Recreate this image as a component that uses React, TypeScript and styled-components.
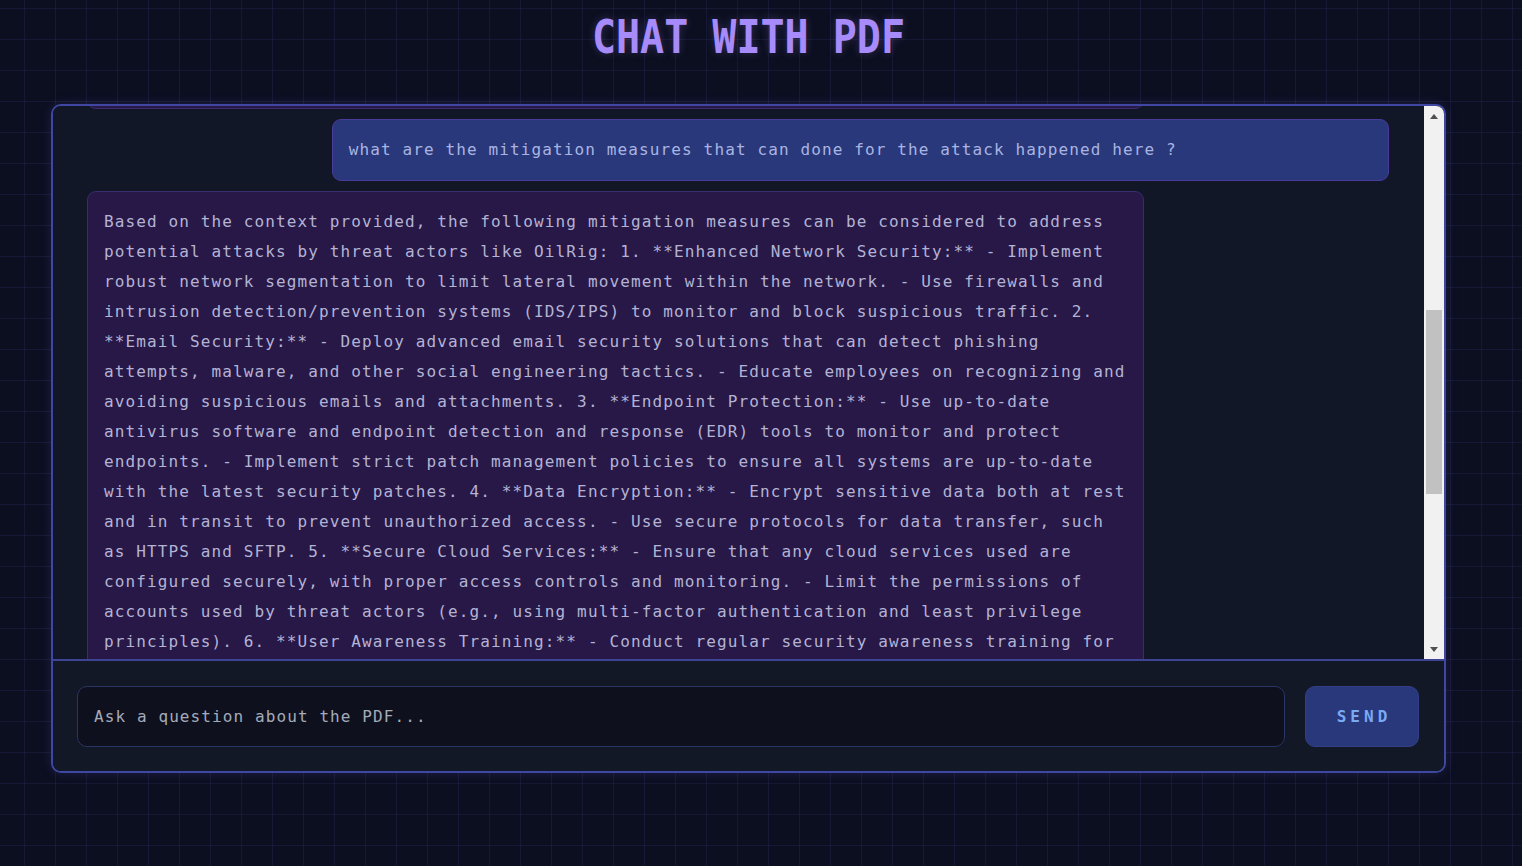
import React, { useCallback, useLayoutEffect, useRef, useState } from "react";
import styled, { createGlobalStyle } from "styled-components";

const GlobalStyle = createGlobalStyle`
  html, body {
    margin: 0;
    padding: 0;
    min-height: 100%;
  }
  body {
    background-color: #0c0f20;
    background-image:
      linear-gradient(rgba(92, 92, 190, 0.13) 1px, transparent 1px),
      linear-gradient(90deg, rgba(92, 92, 190, 0.13) 1px, transparent 1px);
    background-size: 31px 31px;
    background-position: 24px 8px;
    font-family: "DejaVu Sans Mono", "Liberation Mono", monospace;
    min-height: 866px;
  }
`;

const Page = styled.div`
  display: flex;
  flex-direction: column;
  padding: 0 76px 0 51px;
  min-height: 866px;
  box-sizing: border-box;
`;

const Title = styled.h1`
  margin: 7px 0 37px;
  text-align: center;
  font-family: "DejaVu Sans Mono", monospace;
  font-weight: bold;
  font-size: 40px;
  line-height: 60px;
  letter-spacing: 0;
  color: #a78bfa;
  transform: scaleY(1.15);
  text-shadow: 0 0 8px rgba(167, 139, 250, 0.25);
`;

const ChatBox = styled.div`
  display: flex;
  flex-direction: column;
  border: 2px solid #4047a3;
  border-radius: 10px;
  background: #121826;
  overflow: hidden;
  box-shadow: 0 0 12px rgba(99, 102, 241, 0.18);
`;

const ChatBody = styled.div`
  display: flex;
  height: 555px;
  box-sizing: border-box;
  border-bottom: 2px solid #3d4494;
  background: #111726;
`;

const Messages = styled.div`
  flex: 1;
  min-width: 0;
  overflow-y: scroll;
  scrollbar-width: none;
  &::-webkit-scrollbar {
    display: none;
  }
  display: flex;
  flex-direction: column;
  gap: 10px;
  padding: 32px 35px 32px 34px;
`;

const ScrollBar = styled.div`
  width: 20px;
  flex-shrink: 0;
  display: flex;
  flex-direction: column;
  background: #f1f1f1;
`;

const ArrowButton = styled.div`
  height: 20px;
  display: flex;
  align-items: center;
  justify-content: center;
  flex-shrink: 0;
`;

const Track = styled.div`
  position: relative;
  flex: 1;
`;

const Thumb = styled.div`
  position: absolute;
  left: 2px;
  right: 2px;
  background: #c1c1c1;
`;

const Bubble = styled.div<{ $user?: boolean }>`
  box-sizing: border-box;
  width: 81.2%;
  flex-shrink: 0;
  align-self: ${(p) => (p.$user ? "flex-end" : "flex-start")};
  padding: 15px 14px 15px 16px;
  border-radius: 9px;
  border: 1px solid ${(p) => (p.$user ? "#4a3a9a" : "#3a2d6c")};
  background: ${(p) => (p.$user ? "#29387a" : "#271848")};
  color: ${(p) => (p.$user ? "#a9b4e2" : "#b4b3d4")};
  font-family: "DejaVu Sans Mono", monospace;
  font-size: 16px;
  line-height: 30px;
  letter-spacing: 1.12px;
  word-wrap: break-word;
`;

const InputRow = styled.form`
  display: flex;
  gap: 20px;
  padding: 25px 25px 24px 24px;
  background: #121826;
`;

const TextInput = styled.input`
  flex: 1;
  height: 61px;
  box-sizing: border-box;
  padding: 0 16px;
  border-radius: 10px;
  border: 1px solid #2b3563;
  background: #0e111d;
  color: #c8cce0;
  font-family: "DejaVu Sans Mono", monospace;
  font-size: 16px;
  letter-spacing: 1.1px;
  outline: none;
  &::placeholder {
    color: #a4abbb;
  }
`;

const SendButton = styled.button`
  width: 114px;
  height: 61px;
  border: 1px solid #323f86;
  border-radius: 10px;
  background: #29387a;
  color: #7aaaf4;
  font-family: "DejaVu Sans Mono", monospace;
  font-weight: bold;
  font-size: 16px;
  letter-spacing: 4px;
  padding: 0 0 0 4px;
  cursor: pointer;
`;

const Arrow = ({ up }: { up?: boolean }) => (
  <svg width="8" height="5" viewBox="0 0 8 5">
    <polygon points={up ? "0,5 8,5 4,0" : "0,0 8,0 4,5"} fill="#505050" />
  </svg>
);

const prevQuestion = "can you summarize the attack described in this pdf ?";

const prevAnswer =
  "The document describes a cyber espionage campaign attributed to the threat actor OilRig (also known as APT34), which primarily targets organizations in the Middle East, including government, financial, energy and telecommunications sectors. The attackers gained initial access through spear-phishing emails containing malicious attachments and links, often impersonating trusted entities such as job recruiters or business partners. Once executed, the malicious documents used macros to drop custom backdoors that communicated with command-and-control servers over HTTP and DNS tunneling, allowing the attackers to blend in with legitimate network traffic. The group then performed credential harvesting using tools like Mimikatz, moved laterally across the network using stolen credentials and remote administration tools, and established persistence through scheduled tasks. The campaign also leveraged compromised email accounts within trusted organizations to send further phishing messages, and the attackers relied on obfuscated PowerShell scripts to evade detection by traditional antivirus solutions. Finally, sensitive data was collected, compressed and exfiltrated to attacker-controlled infrastructure, including compromised cloud services.";

const question =
  "what are the mitigation measures that can done for the attack happened here ?";

const answer =
  "Based on the context provided, the following mitigation measures can be considered to address potential attacks by threat actors like OilRig: 1. **Enhanced Network Security:** - Implement robust network segmentation to limit lateral movement within the network. - Use firewalls and intrusion detection/prevention systems (IDS/IPS) to monitor and block suspicious traffic. 2. **Email Security:** - Deploy advanced email security solutions that can detect phishing attempts, malware, and other social engineering tactics. - Educate employees on recognizing and avoiding suspicious emails and attachments. 3. **Endpoint Protection:** - Use up-to-date antivirus software and endpoint detection and response (EDR) tools to monitor and protect endpoints. - Implement strict patch management policies to ensure all systems are up-to-date with the latest security patches. 4. **Data Encryption:** - Encrypt sensitive data both at rest and in transit to prevent unauthorized access. - Use secure protocols for data transfer, such as HTTPS and SFTP. 5. **Secure Cloud Services:** - Ensure that any cloud services used are configured securely, with proper access controls and monitoring. - Limit the permissions of accounts used by threat actors (e.g., using multi-factor authentication and least privilege principles). 6. **User Awareness Training:** - Conduct regular security awareness training for employees to help them recognize and report potential threats, including phishing and social engineering attempts. 7. **Incident Response Plan:** - Develop and regularly test an incident response plan to ensure a quick and effective response to security incidents. - Establish clear communication channels and roles for incident handling. 8. **Threat Intelligence:** - Leverage threat intelligence feeds to stay informed about the latest tactics, techniques, and procedures (TTPs) used by threat actors like OilRig. - Share indicators of compromise (IOCs) with industry peers and relevant authorities. 9. **Monitoring and Logging:** - Implement centralized logging and continuous monitoring of network and system activity to detect anomalies early. - Regularly review logs for signs of unauthorized access or data exfiltration, such as unusual DNS queries or outbound connections. 10. **Access Control:** - Enforce strong password policies and regularly audit user accounts and privileges. By implementing these mitigation measures, organizations can significantly reduce the risk of successful attacks and limit the impact of any compromise.";

export default function App() {
  const listRef = useRef<HTMLDivElement>(null);
  const targetRef = useRef<HTMLDivElement>(null);
  const trackRef = useRef<HTMLDivElement>(null);
  const [thumb, setThumb] = useState({ top: 0, height: 0 });

  const updateThumb = useCallback(() => {
    const list = listRef.current;
    const track = trackRef.current;
    if (!list || !track) return;
    const trackH = track.clientHeight;
    const ratio = list.clientHeight / list.scrollHeight;
    const height = Math.max(20, trackH * ratio);
    const maxScroll = list.scrollHeight - list.clientHeight;
    const top = maxScroll > 0 ? (list.scrollTop / maxScroll) * (trackH - height) : 0;
    setThumb({ top, height });
  }, []);

  useLayoutEffect(() => {
    const list = listRef.current;
    const target = targetRef.current;
    if (list && target) {
      list.scrollTop = target.offsetTop - list.offsetTop - 13;
    }
    updateThumb();
  }, [updateThumb]);

  return (
    <>
      <GlobalStyle />
      <Page>
        <Title>CHAT WITH PDF</Title>
        <ChatBox>
          <ChatBody>
            <Messages ref={listRef} onScroll={updateThumb}>
              <Bubble $user>{prevQuestion}</Bubble>
              <Bubble>{prevAnswer}</Bubble>
              <Bubble $user ref={targetRef}>
                {question}
              </Bubble>
              <Bubble>{answer}</Bubble>
            </Messages>
            <ScrollBar>
              <ArrowButton>
                <Arrow up />
              </ArrowButton>
              <Track ref={trackRef}>
                <Thumb style={{ top: thumb.top, height: thumb.height }} />
              </Track>
              <ArrowButton>
                <Arrow />
              </ArrowButton>
            </ScrollBar>
          </ChatBody>
          <InputRow onSubmit={(e) => e.preventDefault()}>
            <TextInput placeholder="Ask a question about the PDF..." />
            <SendButton type="submit">SEND</SendButton>
          </InputRow>
        </ChatBox>
      </Page>
    </>
  );
}
